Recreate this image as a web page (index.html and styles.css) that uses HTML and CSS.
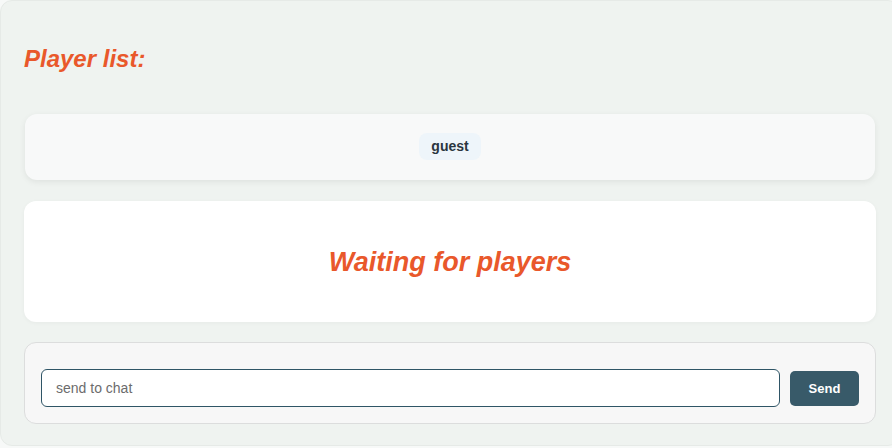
FILE: index.html
```html
<!DOCTYPE html>
<html lang="en">
<head>
<meta charset="utf-8">
<title>Lobby</title>
<link rel="stylesheet" href="styles.css">
</head>
<body>
<div class="lobby">
  <h2 class="title">Player list:</h2>
  <div class="players">
    <span class="chip">guest</span>
  </div>
  <div class="status">
    <h1 class="waiting">Waiting for players</h1>
  </div>
  <form class="chat">
    <input class="chat-input" type="text" placeholder="send to chat">
    <button class="send" type="button">Send</button>
  </form>
</div>
</body>
</html>
```
FILE: styles.css
```css
html, body {
  margin: 0;
  padding: 0;
  background: #f7f9f8;
  overflow: hidden;
  font-family: "Liberation Sans", Arial, sans-serif;
}
.lobby {
  box-sizing: border-box;
  width: 900px;
  height: 446px;
  background: #eff3f0;
  border: 1px solid #e6eae7;
  border-radius: 12px;
  padding: 44px 23px 0 23px;
  display: flex;
  flex-direction: column;
}
.title {
  margin: 0 0 41px 0;
  font-size: 24px;
  line-height: 28px;
  font-weight: bold;
  font-style: italic;
  color: #e9582b;
}
.players {
  margin: 0 1px;
  background: #f8f9f9;
  border-radius: 12px;
  box-shadow: 0 2px 6px rgba(0, 0, 0, 0.07);
  padding: 19px 19px 20px;
  display: flex;
  justify-content: center;
}
.chip {
  background: #eef5fa;
  color: #2a3540;
  font-size: 14px;
  font-weight: bold;
  line-height: 17px;
  padding: 5px 12px;
  border-radius: 8px;
}
.status {
  margin-top: 21px;
  background: #ffffff;
  border-radius: 12px;
  box-shadow: 0 1px 4px rgba(0, 0, 0, 0.04);
  padding: 45px 0 44px;
  text-align: center;
}
.waiting {
  margin: 0;
  font-size: 27px;
  line-height: 32px;
  font-weight: bold;
  font-style: italic;
  color: #e9582b;
}
.chat {
  margin: 20px 0 0 0;
  background: #f7f7f7;
  border: 1px solid #dcdddd;
  border-radius: 12px;
  padding: 26px 16px 16px 16px;
  display: flex;
  align-items: center;
  gap: 10px;
}
.chat-input {
  flex: 1;
  box-sizing: border-box;
  height: 38px;
  border: 1px solid #2f5566;
  border-radius: 6px;
  background: #ffffff;
  padding: 0 14px;
  font-family: "Liberation Sans", Arial, sans-serif;
  font-size: 14px;
  color: #333;
  outline: none;
}
.chat-input::placeholder {
  color: #6c6c6c;
}
.send {
  box-sizing: border-box;
  width: 69px;
  height: 35px;
  padding: 0;
  border: none;
  border-radius: 5px;
  background: #385a69;
  color: #ffffff;
  font-family: "Liberation Sans", Arial, sans-serif;
  font-size: 13px;
  font-weight: bold;
}
```
